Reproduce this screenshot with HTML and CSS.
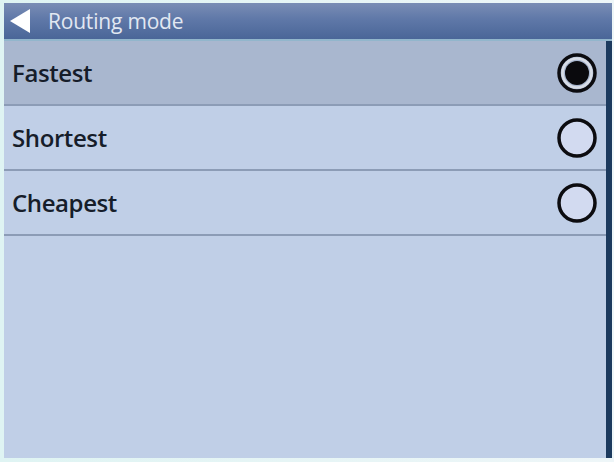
FILE: index.html
```html
<!DOCTYPE html>
<html>
<head>
<meta charset="utf-8">
<link rel="stylesheet" href="styles.css">
</head>
<body>
<div class="frame">
  <div class="header">
    <svg class="back" width="22" height="26" viewBox="0 0 22 26"><polygon points="21,1 21,25 1,13" fill="#ffffff"/></svg>
    <span class="title">Routing mode</span>
  </div>
  <div class="content">
    <div class="row selected">
      <span class="label">Fastest</span>
      <svg class="radio" width="42" height="42" viewBox="0 0 42 42"><circle cx="21" cy="21" r="18" fill="none" stroke="#0c0c10" stroke-width="3.5"/><circle cx="21" cy="21" r="14.5" fill="none" stroke="#d8dde6" stroke-width="2.5"/><circle cx="21" cy="21" r="12" fill="#0a0a0d"/></svg>
    </div>
    <div class="row">
      <span class="label">Shortest</span>
      <svg class="radio" width="42" height="42" viewBox="0 0 42 42"><circle cx="21" cy="21" r="18" fill="#d2daf0" stroke="#0c0c10" stroke-width="3.5"/></svg>
    </div>
    <div class="row">
      <span class="label">Cheapest</span>
      <svg class="radio" width="42" height="42" viewBox="0 0 42 42"><circle cx="21" cy="21" r="18" fill="#d2daf0" stroke="#0c0c10" stroke-width="3.5"/></svg>
    </div>
  </div>
</div>
</body>
</html>
```
FILE: styles.css
```css
html, body {
  margin: 0;
  padding: 0;
}
body {
  width: 614px;
  height: 462px;
  overflow: hidden;
  background: #eaf6f7;
}
.frame {
  box-sizing: border-box;
  width: 614px;
  height: 462px;
  padding: 3px 2px 4px 4px;
  display: flex;
  flex-direction: column;
  background: linear-gradient(to right, #dff4f3, #eef6f8);
}
.header {
  height: 36px;
  display: flex;
  align-items: center;
  padding-left: 5px;
  background: linear-gradient(to bottom, #7a8db5 0%, #5f78a8 45%, #4a6698 100%);
  border-bottom: 2px solid #92b6cc;
}
.back {
  display: block;
}
.title {
  margin-left: 17px;
  font-family: "Open Sans", "DejaVu Sans", sans-serif;
  font-size: 21px;
  color: #e2e8f2;
  letter-spacing: -0.2px;
}
.content {
  flex: 1;
  background: #c0cfe7;
  border-right: 6px solid #1c3a5e;
}
.row {
  height: 63px;
  border-bottom: 2px solid #8c9cb6;
  display: flex;
  align-items: center;
  justify-content: space-between;
  padding-left: 8px;
  padding-right: 8px;
}
.row.selected {
  background: #a9b7cf;
}
.label {
  font-family: "Open Sans", "DejaVu Sans", sans-serif;
  font-weight: 600;
  font-size: 24px;
  color: #161d2a;
  letter-spacing: -0.4px;
}
.radio {
  display: block;
}
```
